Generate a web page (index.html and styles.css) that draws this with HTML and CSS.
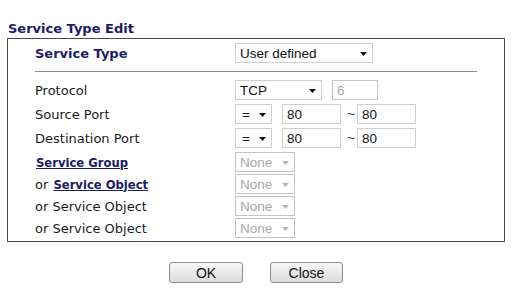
FILE: index.html
```html
<!DOCTYPE html>
<html>
<head>
<meta charset="utf-8">
<link rel="stylesheet" href="styles.css">
</head>
<body>
<div class="page">
  <div class="title">Service Type Edit</div>
  <div class="box">
    <div class="row row-top">
      <div class="label strong">Service Type</div>
      <div class="ctrl">
        <div class="sel w-user"><span>User defined</span><svg class="arr" width="7" height="4" viewBox="0 0 7 4"><path d="M0 0H7L3.5 4Z" fill="#111"/></svg></div>
      </div>
    </div>
    <div class="sep"></div>
    <div class="row row-proto">
      <div class="label">Protocol</div>
      <div class="ctrl">
        <div class="sel w-tcp"><span>TCP</span><svg class="arr" width="7" height="4" viewBox="0 0 7 4"><path d="M0 0H7L3.5 4Z" fill="#111"/></svg></div>
        <div class="inp w-num disabled">6</div>
      </div>
    </div>
    <div class="row row-port">
      <div class="label">Source Port</div>
      <div class="ctrl">
        <div class="sel w-eq"><span>=</span><svg class="arr" width="7" height="4" viewBox="0 0 7 4"><path d="M0 0H7L3.5 4Z" fill="#111"/></svg></div>
        <div class="inp w-port">80</div>
        <span class="tilde">~</span>
        <div class="inp w-port">80</div>
      </div>
    </div>
    <div class="row row-port">
      <div class="label">Destination Port</div>
      <div class="ctrl">
        <div class="sel w-eq"><span>=</span><svg class="arr" width="7" height="4" viewBox="0 0 7 4"><path d="M0 0H7L3.5 4Z" fill="#111"/></svg></div>
        <div class="inp w-port">80</div>
        <span class="tilde">~</span>
        <div class="inp w-port">80</div>
      </div>
    </div>
    <div class="row row-none row-none-first">
      <div class="label"><a class="link">Service Group</a></div>
      <div class="ctrl">
        <div class="sel w-none disabled"><span>None</span><svg class="arr" width="7" height="4" viewBox="0 0 7 4"><path d="M0 0H7L3.5 4Z" fill="#b5b5b5"/></svg></div>
      </div>
    </div>
    <div class="row row-none">
      <div class="label">or <a class="link">Service Object</a></div>
      <div class="ctrl">
        <div class="sel w-none disabled"><span>None</span><svg class="arr" width="7" height="4" viewBox="0 0 7 4"><path d="M0 0H7L3.5 4Z" fill="#b5b5b5"/></svg></div>
      </div>
    </div>
    <div class="row row-none">
      <div class="label">or Service Object</div>
      <div class="ctrl">
        <div class="sel w-none disabled"><span>None</span><svg class="arr" width="7" height="4" viewBox="0 0 7 4"><path d="M0 0H7L3.5 4Z" fill="#b5b5b5"/></svg></div>
      </div>
    </div>
    <div class="row row-none">
      <div class="label">or Service Object</div>
      <div class="ctrl">
        <div class="sel w-none disabled"><span>None</span><svg class="arr" width="7" height="4" viewBox="0 0 7 4"><path d="M0 0H7L3.5 4Z" fill="#b5b5b5"/></svg></div>
      </div>
    </div>
  </div>
  <div class="buttons">
    <button class="btn w-ok">OK</button>
    <button class="btn w-close">Close</button>
  </div>
</div>
</body>
</html>
```
FILE: styles.css
```css
html, body {
  margin: 0;
  padding: 0;
  background: #ffffff;
}
.page {
  padding: 20px 0 0 7px;
  width: 499px;
  font-family: "DejaVu Sans", Verdana, sans-serif;
}
.title {
  font-weight: bold;
  font-size: 13px;
  line-height: 18px;
  color: #1b1b66;
  padding-left: 1px;
}
.box {
  border: 1px solid #4a4a4a;
  width: 496px;
  padding: 4px 0 3px 0;
}
.row {
  display: flex;
  align-items: center;
  height: 20px;
}
.row-port { margin-top: 4px; }
.row-none { margin-top: 2px; }
.row-none-first { margin-top: 4px; }
.label {
  width: 200px;
  padding-left: 27px;
  font-size: 13px;
  color: #1a1a1a;
  white-space: nowrap;
}
.label.strong {
  font-weight: bold;
  font-size: 13px;
  color: #1b1b66;
}
.link {
  font-weight: bold;
  font-size: 11.6px;
  color: #1b1b66;
  text-decoration: underline;
  margin-left: 1px;
}
.ctrl {
  display: flex;
  align-items: center;
}
.sep {
  height: 1px;
  background: #8a8a8a;
  margin: 8px 27px 8px 27px;
}
.sel, .inp {
  box-sizing: border-box;
  height: 20px;
  border: 1px solid #cfcfcf;
  background: #ffffff;
  font-family: "Liberation Sans", Arial, sans-serif;
  font-size: 13.5px;
  color: #111;
  display: flex;
  align-items: center;
  padding-left: 4px;
  position: relative;
}
.sel .arr {
  position: absolute;
  right: 5px;
  top: 8px;
}
.disabled {
  color: #a8a8a8;
  border-color: #c4c4c4;
}
.w-user { width: 138px; }
.w-tcp { width: 87px; }
.w-num { width: 46px; margin-left: 10px; }
.w-eq { width: 37px; padding-left: 6px; }
.w-port { width: 59px; margin-left: 10px; }
.w-none { width: 60px; }
.tilde {
  font-family: "Liberation Sans", Arial, sans-serif;
  font-size: 14px;
  color: #333;
  margin-left: 6px;
  width: 10px;
}
.tilde + .inp { margin-left: 0; }
.buttons {
  display: flex;
  justify-content: center;
  gap: 27px;
  width: 498px;
  margin-top: 20px;
}
.btn {
  box-sizing: border-box;
  height: 21px;
  border: 1px solid #8f8f8f;
  border-radius: 3px;
  background: linear-gradient(#f7f7f7, #dcdcdc);
  font-family: "Liberation Sans", Arial, sans-serif;
  font-size: 14px;
  color: #111;
  padding: 0;
}
.w-ok { width: 74px; }
.w-close { width: 73px; }
```
